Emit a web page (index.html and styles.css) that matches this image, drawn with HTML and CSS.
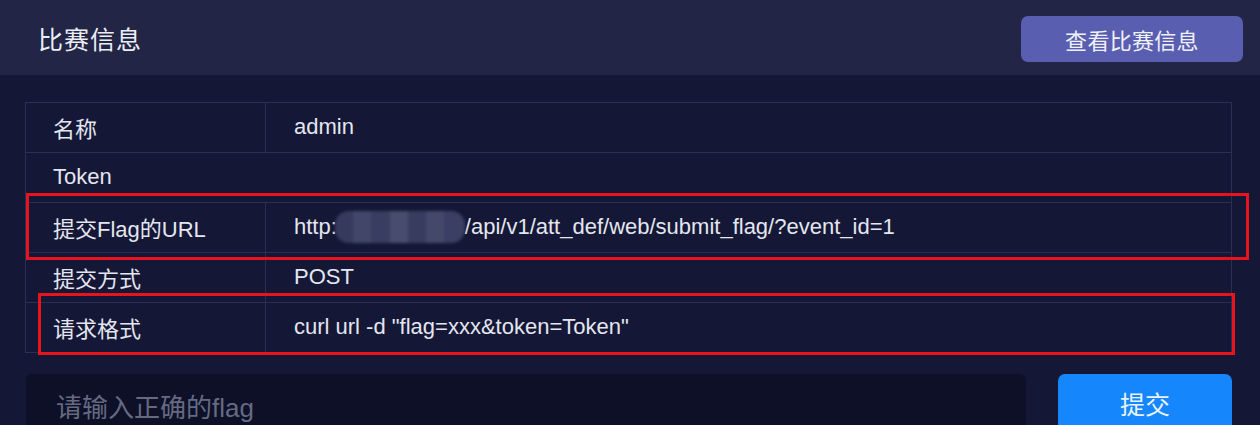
FILE: index.html
```html
<!DOCTYPE html>
<html lang="zh">
<head>
<meta charset="utf-8">
<title>比赛信息</title>
<link rel="stylesheet" href="styles.css">
</head>
<body>
<div class="page">
  <header class="header">
    <h1 class="title">比赛信息</h1>
    <button class="btn-view">查看比赛信息</button>
  </header>
  <main class="main">
    <div class="table">
      <div class="row"><div class="cell label">名称</div><div class="cell value">admin</div></div>
      <div class="row row-nodiv"><div class="cell label">Token</div><div class="cell value"></div></div>
      <div class="row"><div class="cell label">提交Flag的URL</div><div class="cell value"><span>http:</span><span class="mosaic"></span><span>/api/v1/att_def/web/submit_flag/?event_id=1</span></div></div>
      <div class="row"><div class="cell label">提交方式</div><div class="cell value">POST</div></div>
      <div class="row"><div class="cell label">请求格式</div><div class="cell value">curl url -d "flag=xxx&amp;token=Token"</div></div>
      <div class="mark mark-1"></div>
      <div class="mark mark-2"></div>
    </div>
    <div class="submit-row">
      <div class="flag-input">请输入正确的flag</div>
      <button class="btn-submit">提交</button>
    </div>
  </main>
</div>
</body>
</html>
```

FILE: styles.css
```css
html, body {
  margin: 0;
  padding: 0;
  background: #141836;
  overflow: hidden;
}
body {
  font-family: "Liberation Sans", "Noto Sans CJK SC", sans-serif;
  color: #e4e6ef;
  width: 1260px;
  height: 425px;
}
.page {
  display: flex;
  flex-direction: column;
}
.header {
  height: 75px;
  background: #222545;
  display: flex;
  align-items: center;
  justify-content: space-between;
  padding: 0 17px 0 38px;
}
.title {
  margin: 0;
  font-size: 25px;
  font-weight: normal;
  color: #eceef5;
  letter-spacing: 1px;
}
.btn-view {
  width: 222px;
  height: 46px;
  margin-top: 3px;
  border: none;
  border-radius: 7px;
  background: #5a5eb0;
  color: #eef0fa;
  font-family: "Liberation Sans", "Noto Sans CJK SC", sans-serif;
  font-size: 22px;
  letter-spacing: 0.3px;
}
.main {
  padding: 27px 28px 0 25px;
}
.table {
  position: relative;
  border: 1px solid #2b2f52;
  border-bottom: none;
}
.row {
  display: flex;
  height: 50px;
  border-bottom: 1px solid #2b2f52;
  box-sizing: border-box;
}
.cell {
  display: flex;
  align-items: center;
  font-size: 22px;
  padding-bottom: 1px;
}
.label {
  width: 240px;
  padding-left: 27px;
  box-sizing: border-box;
  border-right: 1px solid #2b2f52;
}
.row-nodiv .label {
  border-right-color: transparent;
}
.value {
  padding-left: 28px;
  flex: 1;
}
.mosaic {
  display: inline-block;
  width: 130px;
  height: 32px;
  margin-left: -2px;
  border-radius: 14px;
  background:
    linear-gradient(90deg,
      #383d60 0 14%, #454a6c 14% 28%, #3b4064 28% 42%,
      #4b5072 42% 56%, #3a3f63 56% 70%, #474b6d 70% 84%, #3d4266 84% 100%);
  filter: blur(1.5px);
  opacity: 0.95;
}
.mark {
  position: absolute;
  border: 3px solid #e8141c;
  box-sizing: border-box;
  pointer-events: none;
}
.mark-1 {
  left: 0px;
  top: 90px;
  width: 1223px;
  height: 67px;
}
.mark-2 {
  left: 12px;
  top: 190px;
  width: 1197px;
  height: 62px;
}
.submit-row {
  display: flex;
  gap: 32px;
  margin-top: 21px;
  padding-left: 1px;
}
.flag-input {
  width: 1001px;
  height: 66px;
  background: #0d1027;
  border-radius: 6px;
  display: flex;
  align-items: center;
  padding-left: 30px;
  box-sizing: border-box;
  font-size: 26px;
  color: #656a82;
  padding-bottom: 3px;
}
.btn-submit {
  width: 174px;
  height: 66px;
  border: none;
  border-radius: 7px;
  background: #1586fb;
  color: #eaf2ff;
  font-family: "Liberation Sans", "Noto Sans CJK SC", sans-serif;
  font-size: 25px;
  padding-bottom: 10px;
}
```
